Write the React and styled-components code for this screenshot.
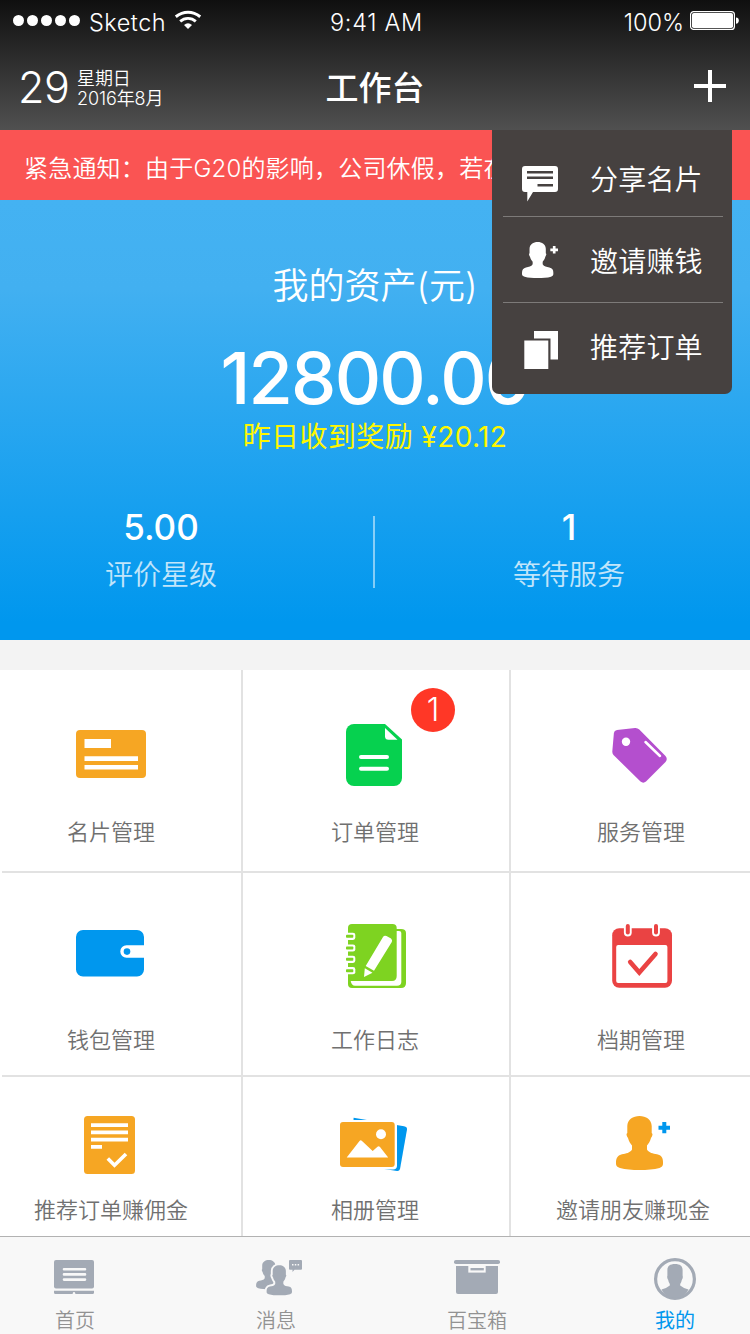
import React, { useState } from 'react';
import styled, { createGlobalStyle } from 'styled-components';

const GlobalStyle = createGlobalStyle`
  * {
    box-sizing: border-box;
  }

  body {
    margin: 0;
    background: #f3f3f3;
    font-family: Inter, 'Noto Sans CJK SC', sans-serif;
    font-weight: 350;
  }
`;

const Page = styled.div`
  width: 750px;
  height: 1334px;
  overflow: hidden;
  display: flex;
  flex-direction: column;
`;

// Header
const Header = styled.header`
  position: relative;
  z-index: 2;
  flex: none;
  height: 130px;
  color: #fff;
  background: linear-gradient(#0f0f0f, #505050);
`;

const StatusBar = styled.div`
  display: grid;
  grid-template-columns: 1fr auto 1fr;
  grid-template-rows: 40px;
  align-items: center;
  height: 40px;
  padding: 0 10px 0 13px;
  font-size: 23.5px;
  line-height: 34px;
`;

const StatusGroup = styled.div`
  display: flex;
  align-items: center;
  height: 40px;
  justify-content: ${(props) => (props.$end ? 'flex-end' : 'flex-start')};
`;

const StatusText = styled.span`
  padding-top: 5px;
  letter-spacing: ${(props) => props.$spacing || '0'};
  margin-right: ${(props) => props.$right || '0'};
`;

const Dots = styled.div`
  display: flex;
  gap: 3px;
  margin-right: 9px;
`;

const Dot = styled.i`
  width: 11px;
  height: 11px;
  border-radius: 50%;
  background: #fff;
`;

const NavBar = styled.div`
  display: grid;
  grid-template-columns: 1fr auto 1fr;
  align-items: center;
  height: 90px;
  padding: 0 24px 0 18px;
`;

const DateBox = styled.div`
  display: flex;
  align-items: center;
`;

const Day = styled.span`
  width: 59px;
  font-size: 43px;
  font-weight: 300;
  line-height: 84px;
  padding-top: 4px;
  letter-spacing: -0.5px;
`;

const DateText = styled.div`
  font-size: 18px;
  line-height: 20px;
  padding-top: 7px;
  letter-spacing: -0.1px;
`;

const Title = styled.h1`
  margin: 5px 0 0 6px;
  font-size: 33px;
  font-weight: 500;
  line-height: 84px;
`;

const AddButton = styled.button`
  justify-self: end;
  width: 32px;
  height: 32px;
  padding: 0;
  margin-top: 2px;
  border: none;
  background: none;
  cursor: pointer;

  & > svg {
    display: block;
  }
`;

// Dropdown menu under the plus button
const Menu = styled.div`
  position: absolute;
  top: 130px;
  right: 18px;
  width: 240px;
  height: 264px;
  padding: 0 9px 0 11px;
  border-radius: 0 0 7px 7px;
  background: #464140;
`;

const MenuItem = styled.div`
  display: flex;
  align-items: flex-start;
  gap: 32px;
  height: 86px;
  padding-left: 19px;

  & + & {
    border-top: 1px solid #7d7a79;
  }

  & > svg {
    margin-top: ${(props) => props.$iconTop}px;
  }
`;

const MenuLabel = styled.span`
  margin-top: ${(props) => props.$top}px;
  font-size: 28px;
  line-height: 40px;
  letter-spacing: 0.2px;
`;

// Notice
const Notice = styled.div`
  flex: none;
  height: 70px;
  padding: 3px 0 0 24px;
  overflow: hidden;
  white-space: nowrap;
  font-size: 24px;
  line-height: 72px;
  letter-spacing: 0.2px;
  color: #fff;
  background: #fa5453;
`;

// Assets
const Assets = styled.section`
  flex: none;
  display: flex;
  flex-direction: column;
  align-items: center;
  height: 440px;
  padding-top: 61px;
  color: #fff;
  background: linear-gradient(#44b2f2 0%, #42b0f1 20%, #0097ee 96%);
`;

const AssetsTitle = styled.div`
  font-size: 36px;
  line-height: 50px;
`;

const Amount = styled.div`
  margin-top: 27px;
  font-size: 72px;
  font-weight: 500;
  line-height: 80px;
  letter-spacing: -1.8px;
`;

const Reward = styled.div`
  margin-top: 1px;
  font-size: 28px;
  font-weight: 400;
  line-height: 36px;
  letter-spacing: 0.4px;
  color: #fff600;
`;

const Stats = styled.div`
  display: grid;
  grid-template-columns: 373px 2px 375px;
  margin-top: 49px;
`;

const Stat = styled.div`
  text-align: center;
  padding: ${(props) => props.$padding};
`;

const StatValue = styled.div`
  font-size: 35px;
  font-weight: 500;
  line-height: 46px;
`;

const StatLabel = styled.div`
  padding-top: 1px;
  font-size: 28px;
  line-height: 48px;
  opacity: 0.75;
`;

const Divider = styled.div`
  height: 72px;
  margin-top: 12px;
  background: rgba(255, 255, 255, 0.5);
`;

// Functions grid
const Grid = styled.main`
  flex: none;
  display: grid;
  grid-template-columns: 241px 268px 239px;
  grid-template-rows: 203px 204px 159px;
  margin-top: 30px;
  padding-left: 2px;
  background: #fff;
`;

const cellPadding = ['0 21px 0 0', '0 2px 0 0', '0 0 0 21px'];
const rowTop = [45, 43, 27];
const rowGap = [22, 29, 11];

const Cell = styled.div`
  position: relative;
  display: flex;
  flex-direction: column;
  align-items: center;
  gap: ${(props) => rowGap[props.$row]}px;
  padding: ${(props) => cellPadding[props.$col]};
  border-right: ${(props) => (props.$col < 2 ? '2px solid #e2e2e2' : 'none')};
  border-bottom: ${(props) => (props.$row < 2 ? '2px solid #e2e2e2' : 'none')};

  & > svg {
    flex: none;
    margin-top: ${(props) => rowTop[props.$row]}px;
  }
`;

const CellLabel = styled.span`
  margin-right: ${(props) => props.$shift || 0}px;
  font-size: 22px;
  line-height: 31px;
  color: #707070;
  white-space: nowrap;
`;

const Badge = styled.span`
  position: absolute;
  top: 18px;
  left: 168px;
  width: 44px;
  height: 44px;
  border-radius: 50%;
  font-size: 32px;
  line-height: 44px;
  text-align: center;
  color: #fff;
  background: #ff3726;
`;

// Tab bar
const TabBar = styled.nav`
  flex: none;
  display: grid;
  grid-template-columns: 120px 120px 120px 114px;
  column-gap: 81px;
  height: 98px;
  padding: 17px 0 0 15px;
  border-top: 1px solid #b2b2b2;
  background: #f8f8f8;
`;

const Tab = styled.div`
  display: flex;
  flex-direction: column;
  align-items: center;
  gap: 5px;
  font-size: 20px;
  line-height: 28px;
  font-weight: ${(props) => (props.$active ? 400 : 350)};
  color: ${(props) => (props.$active ? '#0097ee' : '#929292')};
`;

const ORANGE = '#f6a623';
const BLUE = '#0097ee';
const GRAY = '#a3aab5';
const BODY_PATH =
  'M38.5 12C45 12 50.5 15.5 50.7 22V29L51.5 30C51.5 32 50.5 33 50 34C49 38 47.5 39.5 46 41.5V45.5C48 49 52 49.5 56 50.3C60.5 51.3 62 54 62 58V60C62 62 60.5 63.3 58.5 64C53 65.6 46 66 38.5 66C31 66 24.5 65.6 19 64C16.5 63.3 15 62 15 60V58C15 54 17 51.3 21 50.3C25 49.5 29 49 31 45.5V41.5C29.5 39.5 28 38 27 34C26.5 33 25.5 32 25.5 30L26.3 29V22C26.5 15.5 32 12 38.5 12Z';

function SvgBox({ children }) {
  return <svg width="80" height="80" viewBox="0 0 80 80">{children}</svg>;
}

function CardIcon() {
  return (
    <SvgBox>
      <rect x="5" y="15" width="70" height="48" rx="4" fill={ORANGE} />
      <path d="M13.5 24H40V33H13.5ZM13.5 41.3H67V46H13.5ZM13.5 50H67V54.5H13.5Z" fill="#fff" />
    </SvgBox>
  );
}

function OrderIcon() {
  return (
    <SvgBox>
      <path d="M19 9H50L67 24.5V63A8 8 0 0 1 59 71H19A8 8 0 0 1 11 63V17A8 8 0 0 1 19 9Z" fill="#06d14f" />
      <path d="M50 13L62.5 24.8H53.5A3.5 3.5 0 0 1 50 21.3Z" fill="#fff" />
      <path d="M26 42H52M26 53.7H52" stroke="#fff" strokeWidth="4" strokeLinecap="round" />
    </SvgBox>
  );
}

function TagIcon() {
  return (
    <SvgBox>
      <path
        d="M16 15L34 13Q36.5 12.8 38.3 14.5L64.5 41Q67 44 64.5 47L45 66.5Q42.3 68.8 39.5 66.5L12.5 40Q11.2 38.5 11.3 36.5L12.9 18Q13.2 15.3 16 15Z"
        fill="#b44fce"
      />
      <circle cx="25" cy="26.7" r="4.2" fill="#fff" />
      <path d="M44.5 27L59 41" stroke="#fff" strokeWidth="2.5" strokeLinecap="round" />
    </SvgBox>
  );
}

function WalletIcon() {
  return (
    <SvgBox>
      <path
        d="M12 14H66A7 7 0 0 1 73 21V29.3H55.5A6.2 6.2 0 0 0 55.5 41.7H73V53.5A7 7 0 0 1 66 60.5H12A7 7 0 0 1 5 53.5V21A7 7 0 0 1 12 14Z"
        fill={BLUE}
      />
      <circle cx="56" cy="35.6" r="3.3" fill={BLUE} />
    </SvgBox>
  );
}

function DiaryIcon() {
  const green = '#7ed321';
  return (
    <SvgBox>
      <path d="M13 13H66Q71 13 71 17V67Q71 72 66 72H17Q13 72 13 68Z" fill={green} />
      <path d="M15.7 15H64Q66.3 15 66.3 17V66Q66.3 69.7 62 69.7H20Q16.5 69.7 15.7 65Z" fill="#fff" />
      <path d="M17 8H57.5Q61.7 8 61.7 12V60Q61.7 65 57 65H13V12Q13 8 17 8Z" fill={green} />
      {[20.3, 32, 43.3, 54.7].map((y) => (
        <g key={y}>
          <path d={`M10 ${y - 3.6}H18Q20.3 ${y - 3.6} 20.3 ${y - 1.5}V${y + 1.5}Q20.3 ${y + 3.6} 18 ${y + 3.6}H10Z`} fill="#fff" />
          <rect x="11" y={y - 1.5} width="7.3" height="3" rx="0.8" fill={green} />
        </g>
      ))}
      <path d="M30.7 50L48 21Q49.3 19 51.5 20L56 22.5Q57.8 24 56.8 26L39 54.7ZM29.8 52.3L37.5 56.7L29 61Z" fill="#fff" />
    </SvgBox>
  );
}

function CalendarIcon() {
  const red = '#ea4343';
  return (
    <SvgBox>
      <rect x="11.2" y="12.3" width="59.8" height="59.5" rx="7" fill={red} />
      <rect x="15.2" y="29" width="51.2" height="38" rx="2" fill="#fff" />
      {[26.8, 55].map((x) => (
        <g key={x}>
          <path d={`M${x - 3.9} 10H${x + 3.9}V16.5A3.9 3.9 0 0 1 ${x - 3.9} 16.5Z`} fill="#fff" />
          <rect x={x - 2} y="8" width="4" height="10.5" rx="2" fill={red} />
        </g>
      ))}
      <path d="M29.2 46L38.3 56.5L54.5 38" fill="none" stroke={red} strokeWidth="4.6" strokeLinecap="round" />
    </SvgBox>
  );
}

function RecommendIcon() {
  return (
    <SvgBox>
      <rect x="13" y="12" width="51" height="58" rx="3.5" fill={ORANGE} />
      <path d="M20 19.2H57V23H20ZM20 26.4H57V30.2H20ZM20 33.7H57V37.5H20ZM20 41H31V44.8H20Z" fill="#fff" />
      <path d="M36.8 54.5L43.5 61.3L55 50" fill="none" stroke="#fff" strokeWidth="3.6" />
    </SvgBox>
  );
}

function AlbumIcon() {
  return (
    <SvgBox>
      <path d="M18.6 13.8L69 22.2Q72.3 22.8 72 25.5L65 65Q64.3 67.3 62 67L17 60Z" fill={BLUE} />
      <rect x="2" y="16" width="60" height="49.5" rx="4" fill="#fff" />
      <rect x="5" y="18" width="54.7" height="45" rx="3" fill={ORANGE} />
      <circle cx="46" cy="30.3" r="5" fill="#fff" />
      <path d="M11.7 53.4L24.5 37Q25.7 35.5 27 37L37.7 47L42.5 42.8Q43.7 41.8 45 43L53.2 53.4Z" fill="#fff" />
    </SvgBox>
  );
}

function InviteIcon() {
  return (
    <SvgBox>
      <path d={BODY_PATH} fill={ORANGE} />
      <path d="M61.3 18H65.3V21.7H69V25.7H65.3V29.3H61.3V25.7H57.5V21.7H61.3Z" fill={BLUE} />
    </SvgBox>
  );
}

function ShareMenuIcon() {
  return (
    <svg width="36" height="36" viewBox="0 0 36 36">
      <path d="M3 0H33Q36 0 36 3V23Q36 26 33 26H11L5.3 35.5V26H3Q0 26 0 23V3Q0 0 3 0Z" fill="#fff" />
      <path d="M5 6.3H31M5 11.8H31M15.5 19.3H31" stroke="#464140" strokeWidth="2.4" />
    </svg>
  );
}

function InviteMenuIcon() {
  return (
    <svg width="36" height="36" viewBox="15 12 54 54">
      <path d={BODY_PATH} fill="#fff" />
      <path d="M61.3 18H65.3V21.7H69V25.7H65.3V29.3H61.3V25.7H57.5V21.7H61.3Z" fill="#fff" />
    </svg>
  );
}

function OrderMenuIcon() {
  return (
    <svg width="36" height="38" viewBox="0 0 36 38">
      <path d="M12 0H36V28.5H28.5V7.5H12Z" fill="#fff" />
      <path d="M2.3 9.5H26.3V38H2.3Z" fill="#fff" />
    </svg>
  );
}

function TabSvg({ children }) {
  return <svg width="60" height="48" viewBox="0 0 60 48">{children}</svg>;
}

function HomeTabIcon() {
  return (
    <TabSvg>
      <rect x="9" y="6" width="40" height="28.6" rx="2" fill={GRAY} />
      <path d="M19 15.2H40M19 20.4H40M19 25.6H40" stroke="#f8f8f8" strokeWidth="2.6" strokeLinecap="round" />
      <path d="M9 36.8H49V38.5Q49 40 47.5 40H10.5Q9 40 9 38.5Z" fill={GRAY} />
      <circle cx="29" cy="39.2" r="1.2" fill="#f8f8f8" />
    </TabSvg>
  );
}

function MessageTabIcon() {
  return (
    <TabSvg>
      <g transform="translate(2 -0.4) scale(0.54 0.54)">
        <path d={BODY_PATH} fill={GRAY} />
      </g>
      <g transform="translate(12.5 4.7) scale(0.54 0.555)">
        <path d={BODY_PATH} fill={GRAY} stroke="#f8f8f8" strokeWidth="7" paintOrder="stroke" />
      </g>
      <path d="M44 6H55Q56 6 56 7V14.7Q56 15.7 55 15.7H48.5L46.5 18V15.7H44Q43 15.7 43 14.7V7Q43 6 44 6Z" fill={GRAY} />
      <path d="M46 10.8H47.5M48.8 10.8H50.3M51.6 10.8H53.1" stroke="#f8f8f8" strokeWidth="1.5" />
    </TabSvg>
  );
}

function BoxTabIcon() {
  return (
    <TabSvg>
      <rect x="7" y="6" width="46" height="4" rx="1.8" fill={GRAY} />
      <path d="M9 12H51V38Q51 40 49 40H11Q9 40 9 38Z" fill={GRAY} />
      <path d="M21.3 11H38.7V18.6H21.3Z" fill="#f8f8f8" />
      <rect x="23.5" y="14" width="13.3" height="2.4" fill={GRAY} />
    </TabSvg>
  );
}

function MineTabIcon() {
  return (
    <TabSvg>
      <circle cx="30" cy="25" r="19.4" fill="none" stroke={GRAY} strokeWidth="3.2" />
      <path
        d="M30 10C35 10 37.6 12 37.6 16V21.5Q38.3 24 36.8 26Q36.4 28.5 35.2 30V31.5Q38 34 43.5 35.5C41 40.5 36 44 30 44C24 44 19 40.5 16.5 35.5Q22 34 24.8 31.5V30Q23.6 28.5 23.2 26Q21.7 24 22.4 21.5V16C22.4 12 25 10 30 10Z"
        fill={GRAY}
      />
    </TabSvg>
  );
}

function WifiIcon() {
  return (
    <svg width="28" height="20" viewBox="0 0 28 20">
      <path d="M1.8 6.8Q7.5 2.3 14 2.3T26.2 6.8" fill="none" stroke="#fff" strokeWidth="3" />
      <path d="M6.2 11.4Q9.6 8.3 14 8.3T21.8 11.4" fill="none" stroke="#fff" strokeWidth="2.8" />
      <path d="M10 15Q14 11.5 18 15L14 19Z" fill="#fff" />
    </svg>
  );
}

function BatteryIcon() {
  return (
    <svg width="50" height="20" viewBox="0 -1 50 20">
      <rect x="0.6" y="0.6" width="43.8" height="17.8" rx="3" fill="none" stroke="#fff" strokeWidth="1.2" />
      <rect x="2" y="2" width="41" height="15" rx="1.8" fill="#fff" />
      <path d="M46 6.5Q48.8 6.5 48.8 9.6T46 12.8Z" fill="#fff" />
    </svg>
  );
}

const functions = [
  { label: '名片管理', Icon: CardIcon },
  { label: '订单管理', Icon: OrderIcon, badge: 1 },
  { label: '服务管理', Icon: TagIcon },
  { label: '钱包管理', Icon: WalletIcon },
  { label: '工作日志', Icon: DiaryIcon },
  { label: '档期管理', Icon: CalendarIcon },
  { label: '推荐订单赚佣金', Icon: RecommendIcon },
  { label: '相册管理', Icon: AlbumIcon },
  { label: '邀请朋友赚现金', Icon: InviteIcon, shift: 16 },
];

const tabs = [
  { label: '首页', Icon: HomeTabIcon },
  { label: '消息', Icon: MessageTabIcon },
  { label: '百宝箱', Icon: BoxTabIcon },
  { label: '我的', Icon: MineTabIcon },
];

const menu = [
  { label: '分享名片', Icon: ShareMenuIcon, iconTop: 36, top: 30 },
  { label: '邀请赚钱', Icon: InviteMenuIcon, iconTop: 25, top: 25 },
  { label: '推荐订单', Icon: OrderMenuIcon, iconTop: 28, top: 25 },
];

function App() {
  const [menuOpen, setMenuOpen] = useState(true);
  const [activeTab, setActiveTab] = useState(3);

  return (
    <Page>
      <GlobalStyle />
      <Header>
        <StatusBar>
          <StatusGroup>
            <Dots>
              {[0, 1, 2, 3, 4].map((i) => (
                <Dot key={i} />
              ))}
            </Dots>
            <StatusText $spacing="0.5px" $right="8px">Sketch</StatusText>
            <WifiIcon />
          </StatusGroup>
          <StatusText $spacing="0.7px">9:41 AM</StatusText>
          <StatusGroup $end>
            <StatusText $right="6px">100%</StatusText>
            <BatteryIcon />
          </StatusGroup>
        </StatusBar>
        <NavBar>
          <DateBox>
            <Day>29</Day>
            <DateText>
              <div>星期日</div>
              <div>2016年8月</div>
            </DateText>
          </DateBox>
          <Title>工作台</Title>
          <AddButton onClick={() => setMenuOpen(!menuOpen)}>
            <svg width="32" height="32" viewBox="0 0 32 32">
              <path d="M16 0V32M0 16H32" stroke="#fff" strokeWidth="4" />
            </svg>
          </AddButton>
        </NavBar>
        {menuOpen && (
          <Menu>
            {menu.map(({ label, Icon, iconTop, top }) => (
              <MenuItem key={label} $iconTop={iconTop}>
                <Icon />
                <MenuLabel $top={top}>{label}</MenuLabel>
              </MenuItem>
            ))}
          </Menu>
        )}
      </Header>

      <Notice>紧急通知：由于G20的影响，公司休假，若在</Notice>

      <Assets>
        <AssetsTitle>我的资产(元)</AssetsTitle>
        <Amount>12800.00</Amount>
        <Reward>昨日收到奖励 ¥20.12</Reward>
        <Stats>
          <Stat $padding="0 51px 0 0">
            <StatValue>5.00</StatValue>
            <StatLabel>评价星级</StatLabel>
          </Stat>
          <Divider />
          <Stat $padding="0 0 0 13px">
            <StatValue>1</StatValue>
            <StatLabel>等待服务</StatLabel>
          </Stat>
        </Stats>
      </Assets>

      <Grid>
        {functions.map(({ label, Icon, badge, shift }, i) => (
          <Cell key={label} $row={Math.floor(i / 3)} $col={i % 3}>
            <Icon />
            <CellLabel $shift={shift}>{label}</CellLabel>
            {badge && <Badge>{badge}</Badge>}
          </Cell>
        ))}
      </Grid>

      <TabBar>
        {tabs.map(({ label, Icon }, i) => (
          <Tab key={label} $active={i === activeTab} onClick={() => setActiveTab(i)}>
            <Icon />
            <span>{label}</span>
          </Tab>
        ))}
      </TabBar>
    </Page>
  );
}

export default App;
